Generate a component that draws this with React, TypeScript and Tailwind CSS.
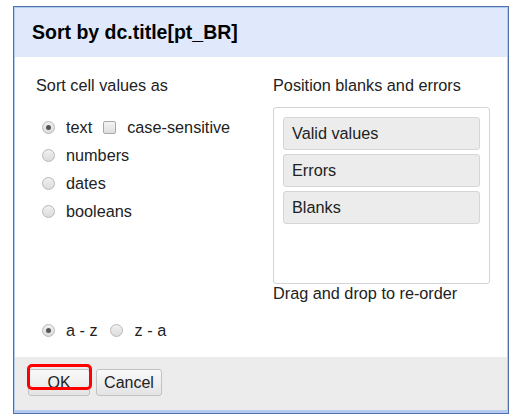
import React from "react";

export default function App() {
  return (
    <div className="h-[419px] w-[518px] bg-white pl-[13px] pt-[6px] font-['Liberation_Sans',Arial,sans-serif] text-[#222]">
      <div className="relative h-[408px] w-[496px] border border-[#4f70a8]">
        <div className="flex h-full flex-col border-x border-b-[3px] border-t border-[#b3cbee]">
          {/* Header */}
          <div className="flex h-[49px] shrink-0 items-center bg-[#dfe9fb] pl-[17px] text-[19.5px] font-bold text-black">
            Sort by dc.title[pt_BR]
          </div>

          {/* Body */}
          <div className="flex flex-1 bg-white pl-[21px] pr-[17px] pt-[19px] text-[16.25px] leading-[19px]">
            <div className="flex flex-1 flex-col pb-[13px]">
              <div>Sort cell values as</div>
              <div className="mt-[18px] flex flex-col pl-[6px]">
                <div className="flex h-[28px] items-center">
                  <Radio checked />
                  <span className="ml-[11px]">text</span>
                  <Checkbox />
                  <span className="ml-[11px]">case-sensitive</span>
                </div>
                <div className="flex h-[28px] items-center">
                  <Radio />
                  <span className="ml-[11px]">numbers</span>
                </div>
                <div className="flex h-[28px] items-center">
                  <Radio />
                  <span className="ml-[11px]">dates</span>
                </div>
                <div className="flex h-[28px] items-center">
                  <Radio />
                  <span className="ml-[11px]">booleans</span>
                </div>
              </div>
              <div className="mt-auto flex h-[28px] items-center pl-[6px]">
                <Radio checked />
                <span className="ml-[11px]">a - z</span>
                <span className="ml-[12px]">
                  <Radio />
                </span>
                <span className="ml-[12px]">z - a</span>
              </div>
            </div>

            <div className="flex w-[217px] flex-col">
              <div>Position blanks and errors</div>
              <div className="mt-[12px] flex h-[177px] flex-col gap-[4px] rounded-[3px] border border-[#d4d4d4] px-[9px] pt-[9px]">
                {["Valid values", "Errors", "Blanks"].map((label) => (
                  <div
                    key={label}
                    className="flex h-[33px] items-center rounded-[3px] border border-[#d6d6d6] bg-[#ececec] pl-[8px]"
                  >
                    {label}
                  </div>
                ))}
              </div>
              <div>Drag and drop to re-order</div>
            </div>
          </div>

          {/* Footer */}
          <div className="flex h-[53px] shrink-0 gap-[6px] bg-[#ececec] pl-[13px] pt-[12px] text-[16px]">
            <button className="h-[27px] w-[62px] rounded-[3px] border border-[#c2c2c2] bg-gradient-to-b from-[#f9f9f9] to-[#e4e4e4] leading-none">
              OK
            </button>
            <button className="h-[27px] w-[66px] rounded-[3px] border border-[#c2c2c2] bg-gradient-to-b from-[#f9f9f9] to-[#e4e4e4] leading-none">
              Cancel
            </button>
          </div>
        </div>

        {/* annotation */}
        <div className="pointer-events-none absolute left-[13px] top-[357px] h-[26px] w-[65px] rounded-[5px] border-[3px] border-[#ff0000]" />
      </div>
    </div>
  );
}

function Radio({ checked = false }: { checked?: boolean }) {
  return (
    <span className="flex h-[13px] w-[13px] shrink-0 items-center justify-center rounded-full border border-[#b8b8b8] bg-gradient-to-b from-[#f0f0f0] to-[#dcdcdc]">
      {checked && <span className="h-[5px] w-[5px] rounded-full bg-[#555]" />}
    </span>
  );
}

function Checkbox() {
  return (
    <span className="ml-[11px] h-[13px] w-[13px] shrink-0 rounded-[2px] border border-[#a9a9a9] bg-gradient-to-b from-[#f4f4f4] to-[#dedede]" />
  );
}
